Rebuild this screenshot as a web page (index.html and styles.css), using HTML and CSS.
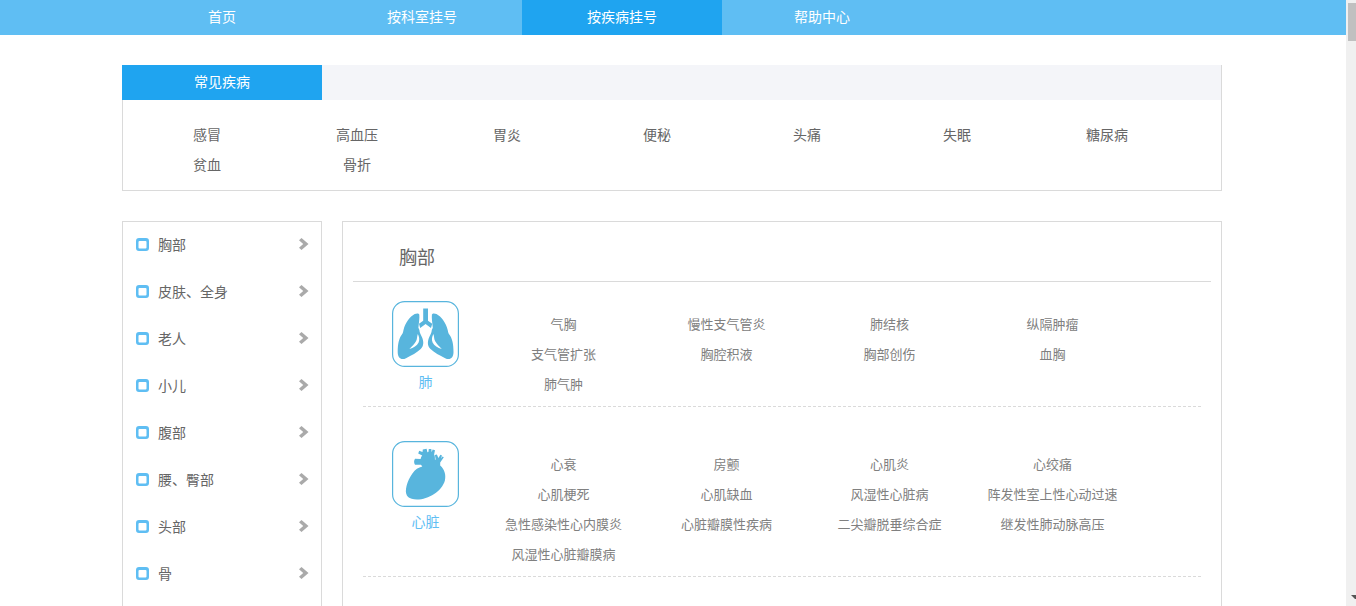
FILE: index.html
```html
<!DOCTYPE html>
<html lang="zh-CN">
<head>
<meta charset="utf-8">
<title>按疾病挂号</title>
<link rel="stylesheet" href="styles.css">
</head>
<body>
<svg class="defs" aria-hidden="true">
  <symbol id="bullet" viewBox="0 0 13 13"><path fill-rule="evenodd" d="M3 0h7a3 3 0 0 1 3 3v7a3 3 0 0 1-3 3H3a3 3 0 0 1-3-3V3a3 3 0 0 1 3-3zM3.500 3a1 1 0 0 0-1 1v5.500a1 1 0 0 0 1 1h6a1 1 0 0 0 1-1V4a1 1 0 0 0-1-1z"/></symbol>
  <symbol id="chevron" viewBox="0 0 10 12"><path d="M2.500 0L9.500 6 2.500 12 0 9.700 4.200 6 0 2.300z"/></symbol>
</svg>
<div class="window">
  <div class="page">
    <nav class="nav">
      <div class="nav-inner">
        <a class="nav-link" href="#">首页</a>
        <a class="nav-link" href="#">按科室挂号</a>
        <a class="nav-link active" href="#" aria-current="page">按疾病挂号</a>
        <a class="nav-link" href="#">帮助中心</a>
      </div>
    </nav>
    <main class="main">
      <div class="container">
      <section class="common">
        <div class="common-head"><h2 class="common-tab">常见疾病</h2></div>
        <div class="common-list">
          <a href="#">感冒</a><a href="#">高血压</a><a href="#">胃炎</a><a href="#">便秘</a><a href="#">头痛</a><a href="#">失眠</a><a href="#">糖尿病</a><a href="#">贫血</a><a href="#">骨折</a>
        </div>
      </section>
      <div class="columns">
        <aside class="parts">
          <a class="part" href="#"><svg class="bullet"><use href="#bullet"/></svg><span>胸部</span><svg class="chevron"><use href="#chevron"/></svg></a>
          <a class="part" href="#"><svg class="bullet"><use href="#bullet"/></svg><span>皮肤、全身</span><svg class="chevron"><use href="#chevron"/></svg></a>
          <a class="part" href="#"><svg class="bullet"><use href="#bullet"/></svg><span>老人</span><svg class="chevron"><use href="#chevron"/></svg></a>
          <a class="part" href="#"><svg class="bullet"><use href="#bullet"/></svg><span>小儿</span><svg class="chevron"><use href="#chevron"/></svg></a>
          <a class="part" href="#"><svg class="bullet"><use href="#bullet"/></svg><span>腹部</span><svg class="chevron"><use href="#chevron"/></svg></a>
          <a class="part" href="#"><svg class="bullet"><use href="#bullet"/></svg><span>腰、臀部</span><svg class="chevron"><use href="#chevron"/></svg></a>
          <a class="part" href="#"><svg class="bullet"><use href="#bullet"/></svg><span>头部</span><svg class="chevron"><use href="#chevron"/></svg></a>
          <a class="part" href="#"><svg class="bullet"><use href="#bullet"/></svg><span>骨</span><svg class="chevron"><use href="#chevron"/></svg></a>
        </aside>
        <section class="detail">
          <h1 class="detail-title">胸部</h1>
          <div class="organs">
            <article class="organ">
              <a class="organ-link" href="#">
                <svg class="organ-icon" viewBox="0 0 67 66">
                  <rect class="frame" x="0.600" y="0.600" width="65.800" height="64.800" rx="12"/>
                  <path d="M31.200 7.500h4.800v12.200l4.200 3.100-1.200 4.200-5.400-4.100-5.400 4.100-1.200-4.200 4.200-3.100z"/>
                  <path d="M27.300 13.500c-.5-1.300-2.500-1.500-4.600-.4-4.800 2.600-9.500 9-11.200 15.800-.4 2-.8 3.700-1.600 4.600-3 3.600-4.200 10-4.200 17.500 0 6 3.500 8.500 8.300 6.200 5.500-2.800 11-5.600 14.700-9.200 3.300-3.300 3.100-7.500 1.300-11.800-1-2.300-2.500-4.700-2.600-7.300l-1-2.200c.4-4.200 1.300-9.800.9-13.200z"/>
                  <path d="M39.900 13.500c.5-1.300 2.500-1.500 4.600-.4 4.800 2.600 9.500 9 11.200 15.800.4 2 .8 3.700 1.600 4.600 3 3.600 4.200 10 4.200 17.500 0 6-3.500 8.500-8.300 6.200-5.500-2.800-11-5.600-14.700-9.200-3.300-3.300-3.100-7.500-1.300-11.800 1-2.300 2.500-4.700 2.600-7.300l1-2.200c-.4-4.200-1.300-9.800-.9-13.200z"/>
                  <path class="gap" d="M25.800 33c-1 3-.4 4.800-1.800 7.200-1.600 3-4 4.800-6.600 7.700 4.200-1 7.600-3.400 9.200-6.500 1.300-2.900.5-5.700-.8-8.400zM41.400 33c1 3 .4 4.800 1.800 7.200 1.600 3 4 4.800 6.600 7.700-4.200-1-7.600-3.400-9.200-6.500-1.300-2.900-.5-5.700.8-8.400z"/>
                </svg>
                <span>肺</span>
              </a>
              <div class="diseases">
                <a href="#">气胸</a><a href="#">慢性支气管炎</a><a href="#">肺结核</a><a href="#">纵隔肿瘤</a><a href="#">支气管扩张</a><a href="#">胸腔积液</a><a href="#">胸部创伤</a><a href="#">血胸</a><a href="#">肺气肿</a>
              </div>
            </article>
            <article class="organ">
              <a class="organ-link" href="#">
                <svg class="organ-icon" viewBox="0 0 67 66">
                  <rect class="frame" x="0.600" y="0.600" width="65.800" height="64.800" rx="12"/>
                  <path d="M30.300 25.500l-1.300-1.800h-6c-1.200-2-1.200-4.100 0-6l5.600.3c.2-1.500.8-2.700 1.600-3.600l-4-1.900 1-2.700 3.300 1.200.3-2.600 3.800-.6.8 3.400 1-.1.400-3h2.500l.4 3.100.9-2.700 2.400.7-.9 4.300c1 1.800.8 3.500.8 5l.8.200-.8-4.700 2-.4 1.500 3.500 2-3.300 1.600.8-1 3 1.600-2.200 1.200.8-3.600 5.400v3c4.500 4 5.900 9.500 4.700 14.800C50 50 36.500 58.500 25 58.500c-8 0-12-3.500-11-10.500 1-7.500 6.500-19 13.500-21.500 1-.4 2-.6 2.800-1z"/>
                </svg>
                <span>心脏</span>
              </a>
              <div class="diseases">
                <a href="#">心衰</a><a href="#">房颤</a><a href="#">心肌炎</a><a href="#">心绞痛</a><a href="#">心肌梗死</a><a href="#">心肌缺血</a><a href="#">风湿性心脏病</a><a href="#">阵发性室上性心动过速</a><a href="#">急性感染性心内膜炎</a><a href="#">心脏瓣膜性疾病</a><a href="#">二尖瓣脱垂综合症</a><a href="#">继发性肺动脉高压</a><a href="#">风湿性心脏瓣膜病</a>
              </div>
            </article>
          </div>
        </section>
      </div>
      </div>
    </main>
  </div>
  <div class="scrollbar" aria-hidden="true">
    <div class="thumb"></div>
    <svg class="arrow" viewBox="0 0 5 5"><path d="M0 0h5v4L4 4z"/></svg>
  </div>
</div>
</body>
</html>
```
FILE: styles.css
```css
* { box-sizing: border-box; }

body {
  margin: 0;
  background: #fff;
  color: #666;
  font: 14px/30px "Noto Sans CJK SC", sans-serif;
}

a { color: inherit; text-decoration: none; }
h1, h2 { margin: 0; font-weight: 400; }
svg { display: block; flex: none; }
.defs { position: absolute; width: 0; height: 0; }

.window { display: flex; height: 100vh; overflow: hidden; }
.page { flex: 1; min-width: 0; overflow: hidden; }

.nav, .main { padding-right: 2px; }
.nav { background: #5fbef3; color: #fff; }
.main { padding-top: 30px; }
.nav-inner, .container { max-width: 1100px; margin: 0 auto; }
.nav-inner { display: flex; }
.nav-link { width: 200px; padding-bottom: 2px; line-height: 33px; text-align: center; }
.nav-link.active { background: #1fa4f0; }

.common { border: 1px solid #dadada; border-top: 0; margin-bottom: 30px; }
.common-head { background: #f4f5f9; }
.common-tab {
  width: 200px;
  margin-left: -1px;
  padding-bottom: 2px;
  background: #1fa4f0;
  color: #fff;
  font-size: 14px;
  line-height: 33px;
  text-align: center;
}
.common-list {
  display: grid;
  grid-template-columns: repeat(auto-fill, 150px);
  padding: 19px 9px 11px;
  text-align: center;
}

.columns { display: flex; gap: 20px; }
.parts { width: 200px; border: 1px solid #dadada; padding-bottom: 47px; }
.part { display: flex; align-items: center; height: 47px; padding: 0 12px 3px 13px; gap: 9px; }
.bullet { width: 13px; height: 13px; fill: #5fbef3; }
.chevron { width: 10px; height: 12px; margin-left: auto; fill: #aaa; }

.detail { flex: 1; min-width: 0; border: 1px solid #dadada; padding: 10px 10px 60px; }
.detail-title {
  padding: 0 46px;
  border-bottom: 1px solid #dadada;
  font-size: 18px;
  line-height: 49px;
}
.organs { display: grid; gap: 34px; padding: 19px 10px 0; }
.organ { display: flex; padding: 0 29px; border-bottom: 1px dashed #dadada; }
.organ-link { width: 67px; color: #5fbef3; line-height: 28px; text-align: center; }
.organ-link span { display: block; }
.organ-icon { width: 67px; height: 66px; fill: #58b5dd; }
.frame { fill: none; stroke: #58b5dd; stroke-width: 1.200px; }
.gap { fill: #fff; }
.diseases {
  display: grid;
  flex: 1;
  grid-template-columns: repeat(auto-fill, 163px);
  padding: 8px 0 7px 23px;
  color: #808080;
  font-size: 13px;
  text-align: center;
  white-space: nowrap;
}

.scrollbar {
  display: flex;
  flex-direction: column;
  justify-content: space-between;
  align-items: flex-end;
  width: 10px;
  padding: 3px 0 6px;
  background: #f0f0f0;
}
.thumb { width: 8px; height: 38px; background: #c0c0c0; }
.arrow { width: 5px; height: 5px; fill: #555; }
```
